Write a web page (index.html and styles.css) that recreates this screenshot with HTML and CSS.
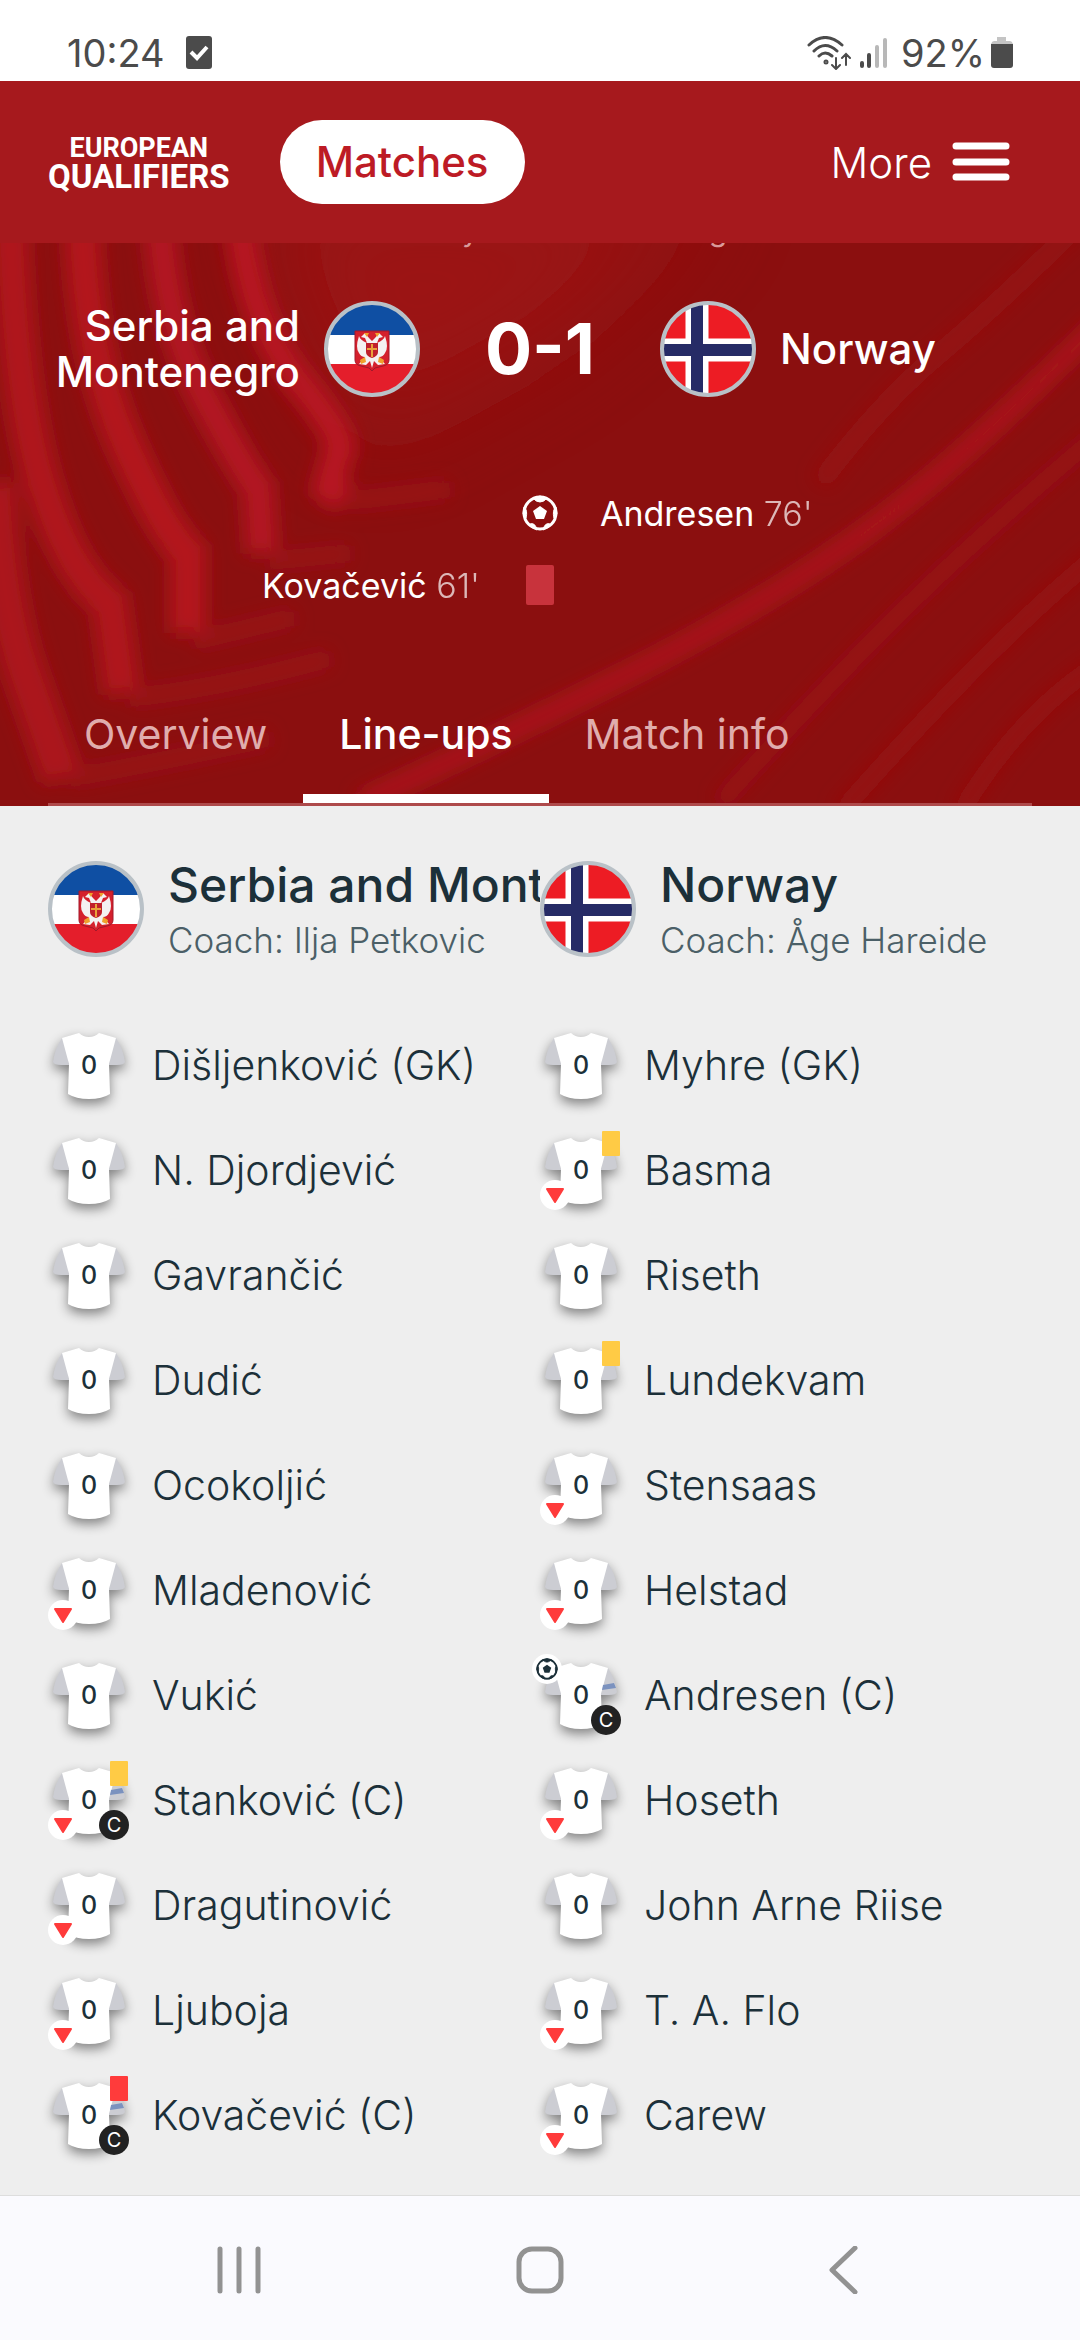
FILE: index.html
```html
<!doctype html>
<html lang="en">
  <head>
    <meta charset="UTF-8" />
    <meta name="viewport" content="width=device-width, initial-scale=1.0" />
    <title>Serbia and Montenegro 0-1 Norway | Line-ups</title>
    <link rel="stylesheet" href="styles.css">
  </head>
  <body>
    <!-- Shared icons -->
    <svg class="sprite" aria-hidden="true">
      <symbol id="flag-scg" viewBox="0 0 96 96">
        <clipPath id="disc"><circle cx="48" cy="48" r="45" /></clipPath>
        <g clip-path="url(#disc)">
          <rect width="96" height="34" fill="#0f4fa3" />
          <rect y="34" width="96" height="29" fill="#fff" />
          <rect y="63" width="96" height="33" fill="#e41e2b" />
        </g>
        <path d="M31 30h34v29q0 5-6 6l-8 2-3 3-3-3-8-2q-6-1-6-6z" fill="#d4202c" stroke="#a3182a" stroke-width="1" />
        <path d="M45 37l-4-5-4 4 4 1 2 5q-7-3-8-7-4 12 0 17 2 4 6 4l-6 7 7 1 4-4 2 7 2-7 4 4 7-1-6-7q4 0 6-4 4-5 0-17-1 4-8 7l2-5 4-1-4-4-4 5-3 3z" fill="#f4f1f1" />
        <path d="M40 32h5l-2 4zM51 32h5l-3 4zM36 59l5-3 1 5-5 2zM60 59l-5-3-1 5 5 2z" fill="#f0a02c" />
        <path d="M42 42h12v9q0 4-6 6-6-2-6-6z" fill="#c01f2b" />
        <path d="M48 43v13M43 48h10" stroke="#e9a13a" stroke-width="2" />
        <circle cx="48" cy="48" r="46" fill="none" stroke="#b9c1c7" stroke-width="4" />
      </symbol>
      <symbol id="flag-nor" viewBox="0 0 96 96">
        <g clip-path="url(#disc)">
          <rect width="96" height="96" fill="#ed1c24" />
          <path d="M37 0v96M0 49h96" stroke="#fff" stroke-width="23" />
          <path d="M37 0v96M0 49h96" stroke="#262b66" stroke-width="12" />
        </g>
        <circle cx="48" cy="48" r="46" fill="none" stroke="#b9c1c7" stroke-width="4" />
      </symbol>
      <symbol id="ball" viewBox="0 0 36 36">
        <circle cx="18" cy="18" r="16" fill="none" stroke="currentColor" stroke-width="3" />
        <path d="M18 11l7 5-3 8h-8l-3-8z" fill="currentColor" />
        <path d="M11 3q3 4 7 4t7-4l-7-2zM2 12q4 3 2 11l-3-4zM34 12q-4 3-2 11l3-4zM8 29q5-2 7 6l-6-3zM28 29q-5-2-7 6l6-3z" fill="currentColor" stroke="currentColor" stroke-width="1" />
      </symbol>
      <symbol id="jersey" viewBox="0 0 82 82">
        <path d="M14 14Q7 24 5 38q1 3 8 3h8L20 20zM68 14q7 10 9 24-1 3-8 3h-8l1-21z" fill="#cccdd3" />
        <path d="M14 14l17-5q4 4 10 4t10-4l17 5-7 26 1 30q-8 5-21 5t-21-5l1-30z" fill="#fff" />
      </symbol>
      <symbol id="jersey-captain" viewBox="0 0 82 82">
        <use href="#jersey" />
        <path d="M63 31l11-2 2 5-14 2z" fill="#7b92bf" />
      </symbol>
      <symbol id="sub-off" viewBox="0 0 30 30">
        <path d="M7 9h16l-8 13z" fill="#ff3b3b" stroke="#ff3b3b" stroke-width="2" stroke-linejoin="round" />
      </symbol>
    </svg>

    <!-- Phone status bar -->
    <div class="status-bar">
      <div class="status-group">
        <span>10:24</span>
        <svg class="task-icon" width="28" height="34" viewBox="0 0 28 34">
          <rect x="1" y="0" width="26" height="33" rx="3" fill="#4b4b4b" />
          <path d="M6 16l6 6 10-11" fill="none" stroke="#fff" stroke-width="4" />
        </svg>
      </div>
      <div class="status-group">
        <svg width="44" height="34" viewBox="0 0 44 34" fill="none" stroke="#4b4b4b" stroke-width="3" stroke-linecap="round">
          <path d="M2 9q16-15 33 0M7 15q11-11 23 0M12 20q6-6 13 0" />
          <circle cx="19" cy="26" r="1" />
          <path d="M29 22v10M25 29l4 4 4-4M39 29V19M35 22l4-4 4 4" stroke-width="2" />
        </svg>
        <svg class="signal-icon" width="28" height="34" viewBox="0 0 28 34" stroke-width="4" stroke-linecap="round">
          <path d="M3 27v3M10 19v11" stroke="#4b4b4b" />
          <path d="M18 11v19M26 4v26" stroke="#b8b8b8" />
        </svg>
        <span>92%</span>
        <svg class="battery-icon" width="22" height="32" viewBox="0 0 22 32">
          <path d="M6 0h9v4h4q2 0 3 3H0q1-3 3-3h3z" fill="#c4c4c4" />
          <path d="M0 7h22v21q0 3-3 3H3q-3 0-3-3z" fill="#4b4b4b" />
        </svg>
      </div>
    </div>

    <header class="site-header">
      <a class="logo" href="#"><span class="logo-top">EUROPEAN</span><span class="logo-bottom">QUALIFIERS</span></a>
      <a class="pill" href="#">Matches</a>
      <button class="more" type="button">
        More
        <svg width="58" height="40" viewBox="0 0 58 40" stroke="#fff" stroke-width="7" stroke-linecap="round">
          <path d="M4 4h50M4 20h50M4 35h50" />
        </svg>
      </button>
    </header>

    <!-- Match summary -->
    <section class="hero">
      <svg class="hero-art" viewBox="0 0 1080 563" preserveAspectRatio="none" aria-hidden="true">
        <defs>
          <filter id="soft" x="-20%" y="-20%" width="140%" height="140%"><feGaussianBlur stdDeviation="9" /></filter>
          <filter id="wide" x="-50%" y="-50%" width="200%" height="200%"><feGaussianBlur stdDeviation="50" /></filter>
        </defs>
        <path d="M250-60H720L560 90 360 200z" fill="#a01416" opacity="0.8" filter="url(#wide)" />
        <g fill="none" filter="url(#soft)">
          <path d="M350 258l100-12M270 318l80-8M195 398l100-24M130 455q90-10 200-40M70 535q90-16 200-40" stroke="#a8161d" stroke-width="18" opacity="0.5" />
          <path d="M240-20Q250 80 300 140T338 210L328 245 345 256" stroke="#b81723" stroke-width="30" />
          <path d="M160-20Q165 80 205 155T258 245L262 310" stroke="#b31721" stroke-width="32" />
          <path d="M82-20Q85 110 125 200T188 310L188 390" stroke="#b4171f" stroke-width="36" />
          <path d="M10-20Q15 150 42 240T110 360L122 450" stroke="#b0171e" stroke-width="36" />
          <path d="M-5 240Q0 360 25 430T62 535" stroke="#ac151c" stroke-width="40" />
          <path d="M1100 80Q950 230 850 300T620 435 360 560" stroke="#ae161d" stroke-width="18" />
          <path d="M1100-40Q1000 60 940 110T820 240" stroke="#a01418" stroke-width="20" opacity="0.5" />
          <path d="M1100 190Q970 300 890 380T720 560" stroke="#a01418" stroke-width="16" opacity="0.7" />
          <path d="M1100 310Q990 400 840 570M1100 420Q1020 470 960 570" stroke="#9b1316" stroke-width="18" opacity="0.7" />
        </g>
      </svg>
      <div class="round"><span>Saturday 12 Nov - First leg</span></div>
      <div class="scoreline">
        <div class="side side-home">
          <span>Serbia and Montenegro</span>
          <svg class="flag" role="img" aria-label="Serbia and Montenegro"><use href="#flag-scg" /></svg>
        </div>
        <strong class="score">0-1</strong>
        <div class="side">
          <svg class="flag" role="img" aria-label="Norway"><use href="#flag-nor" /></svg>
          <span>Norway</span>
        </div>
      </div>
      <div class="events">
        <div class="event">
          <span></span>
          <svg class="event-ball"><use href="#ball" /></svg>
          <span>Andresen <small>76'</small></span>
        </div>
        <div class="event">
          <span class="event-home">Kovačević <small>61'</small></span>
          <i class="event-card"></i>
          <span></span>
        </div>
      </div>
      <nav class="tabs">
        <a class="tab" href="#">Overview</a>
        <a class="tab active" href="#" aria-current="page">Line-ups</a>
        <a class="tab" href="#">Match info</a>
      </nav>
    </section>

    <!-- Line-ups -->
    <main class="lineups">
      <section class="team">
        <div class="team-header">
          <svg class="flag"><use href="#flag-scg" /></svg>
          <div>
            <h2>Serbia and Montenegro</h2>
            <p>Coach: Ilja Petkovic</p>
          </div>
        </div>
        <ul class="players">
          <li><span class="shirt"><svg><use href="#jersey" /></svg><b>0</b></span>Dišljenković (GK)</li>
          <li><span class="shirt"><svg><use href="#jersey" /></svg><b>0</b></span>N. Djordjević</li>
          <li><span class="shirt"><svg><use href="#jersey" /></svg><b>0</b></span>Gavrančić</li>
          <li><span class="shirt"><svg><use href="#jersey" /></svg><b>0</b></span>Dudić</li>
          <li><span class="shirt"><svg><use href="#jersey" /></svg><b>0</b></span>Ocokoljić</li>
          <li><span class="shirt"><svg><use href="#jersey" /></svg><b>0</b><svg class="badge off"><use href="#sub-off" /></svg></span>Mladenović</li>
          <li><span class="shirt"><svg><use href="#jersey" /></svg><b>0</b></span>Vukić</li>
          <li><span class="shirt"><svg><use href="#jersey-captain" /></svg><b>0</b><i class="card yellow"></i><svg class="badge off"><use href="#sub-off" /></svg><i class="badge captain">C</i></span>Stanković (C)</li>
          <li><span class="shirt"><svg><use href="#jersey" /></svg><b>0</b><svg class="badge off"><use href="#sub-off" /></svg></span>Dragutinović</li>
          <li><span class="shirt"><svg><use href="#jersey" /></svg><b>0</b><svg class="badge off"><use href="#sub-off" /></svg></span>Ljuboja</li>
          <li><span class="shirt"><svg><use href="#jersey-captain" /></svg><b>0</b><i class="card red"></i><i class="badge captain">C</i></span>Kovačević (C)</li>
        </ul>
      </section>
      <section class="team">
        <div class="team-header">
          <svg class="flag"><use href="#flag-nor" /></svg>
          <div>
            <h2>Norway</h2>
            <p>Coach: Åge Hareide</p>
          </div>
        </div>
        <ul class="players">
          <li><span class="shirt"><svg><use href="#jersey" /></svg><b>0</b></span>Myhre (GK)</li>
          <li><span class="shirt"><svg><use href="#jersey" /></svg><b>0</b><i class="card yellow"></i><svg class="badge off"><use href="#sub-off" /></svg></span>Basma</li>
          <li><span class="shirt"><svg><use href="#jersey" /></svg><b>0</b></span>Riseth</li>
          <li><span class="shirt"><svg><use href="#jersey" /></svg><b>0</b><i class="card yellow"></i></span>Lundekvam</li>
          <li><span class="shirt"><svg><use href="#jersey" /></svg><b>0</b><svg class="badge off"><use href="#sub-off" /></svg></span>Stensaas</li>
          <li><span class="shirt"><svg><use href="#jersey" /></svg><b>0</b><svg class="badge off"><use href="#sub-off" /></svg></span>Helstad</li>
          <li><span class="shirt"><svg><use href="#jersey-captain" /></svg><b>0</b><svg class="badge goal"><use href="#ball" /></svg><i class="badge captain">C</i></span>Andresen (C)</li>
          <li><span class="shirt"><svg><use href="#jersey" /></svg><b>0</b><svg class="badge off"><use href="#sub-off" /></svg></span>Hoseth</li>
          <li><span class="shirt"><svg><use href="#jersey" /></svg><b>0</b></span>John Arne Riise</li>
          <li><span class="shirt"><svg><use href="#jersey" /></svg><b>0</b><svg class="badge off"><use href="#sub-off" /></svg></span>T. A. Flo</li>
          <li><span class="shirt"><svg><use href="#jersey" /></svg><b>0</b><svg class="badge off"><use href="#sub-off" /></svg></span>Carew</li>
        </ul>
      </section>
    </main>

    <!-- Phone navigation bar -->
    <nav class="phone-nav">
      <button type="button" aria-label="Recent apps">
        <svg width="48" height="48" viewBox="0 0 48 48"><path d="M5 3v42M24 3v42M43 3v42" /></svg>
      </button>
      <button type="button" aria-label="Home">
        <svg width="48" height="48" viewBox="0 0 48 48"><rect x="3" y="3" width="42" height="42" rx="13" /></svg>
      </button>
      <button type="button" aria-label="Back">
        <svg width="48" height="48" viewBox="0 0 48 48"><path d="M38 2L15 24l23 22" /></svg>
      </button>
    </nav>
  </body>
</html>
```

FILE: styles.css
```css
* {
  box-sizing: border-box;
}
body {
  margin: 0;
  min-height: 100vh;
  display: flex;
  flex-direction: column;
  background: #eee;
  color: #1c3039;
  font-family: Inter, "Open Sans", sans-serif;
  font-size: 42px;
}
a {
  color: inherit;
  text-decoration: none;
}
button {
  border: 0;
  background: none;
  color: inherit;
  font: inherit;
  cursor: pointer;
}
svg {
  display: block;
  flex: none;
}
.sprite {
  position: absolute;
  width: 0;
  height: 0;
}

/* Status bar */
.status-bar {
  display: flex;
  justify-content: space-between;
  padding: 29px 67px 4px;
  background: #fff;
  color: #4b4b4b;
  font-size: 38px;
  line-height: 48px;
}
.status-group {
  display: flex;
  align-items: center;
}
.task-icon {
  margin-left: 20px;
}
.signal-icon {
  margin: 0 14px 0 8px;
}
.battery-icon {
  margin-left: 6px;
}

/* Header */
.site-header {
  display: flex;
  align-items: center;
  padding: 39px 64px 39px 48px;
  background: #a6191d;
  color: #fff;
}
.logo {
  display: flex;
  flex-direction: column;
  align-items: center;
  padding-top: 4px;
  font-family: Roboto, sans-serif;
  font-weight: 700;
}
.logo-top {
  font-size: 27px;
  line-height: 26px;
}
.logo-bottom {
  font-size: 33px;
  line-height: 32px;
}
.pill {
  margin-left: 50px;
  padding: 0 36px;
  border-radius: 42px;
  background: #fff;
  color: #bd1b25;
  font-weight: 500;
  line-height: 84px;
}
.more {
  display: flex;
  align-items: center;
  gap: 20px;
  margin-left: auto;
  padding: 0 6px;
  font-weight: 300;
}

/* Hero */
.hero {
  position: relative;
  overflow: hidden;
  background: #8b0f0f;
  color: #fff;
}
.hero-art {
  position: absolute;
  inset: 0;
  width: 100%;
  height: 100%;
}
.round,
.scoreline,
.events,
.tabs {
  position: relative;
}
.round {
  display: flex;
  align-items: flex-end;
  justify-content: center;
  height: 6px;
  overflow: hidden;
  color: #d99a9a;
  font-size: 30px;
  line-height: 38px;
}
.flag {
  width: 96px;
  height: 96px;
}
.scoreline {
  display: flex;
  align-items: center;
  padding: 52px 36px 0;
}
.side {
  flex: 1 1 0;
  display: flex;
  align-items: center;
  gap: 24px;
  font-weight: 500;
  line-height: 46px;
}
.side-home {
  justify-content: flex-end;
  text-align: right;
}
.score {
  min-width: 240px;
  font-size: 70px;
  font-weight: 700;
  line-height: 96px;
  text-align: center;
}
.events {
  padding: 80px 48px 0;
}
.event {
  display: grid;
  grid-template-columns: 1fr 120px 1fr;
  align-items: center;
  justify-items: center;
  height: 72px;
  font-size: 34px;
}
.event span {
  width: 100%;
}
.event small {
  font-size: 34px;
  font-weight: 300;
  opacity: 0.7;
}
.event-home {
  text-align: right;
}
.event-ball {
  width: 36px;
  height: 36px;
}
.event-card {
  width: 28px;
  height: 40px;
  border-radius: 2px;
  background: #c8333c;
}
.tabs {
  display: flex;
  margin: 54px 48px 0;
  border-bottom: 3px solid #ae4a4b;
}
.tab {
  padding: 0 36px;
  border-bottom: 9px solid transparent;
  color: #e0adad;
  font-size: 41px;
  font-weight: 400;
  line-height: 119px;
}
.tab.active {
  border-color: #fff;
  color: #fff;
  font-weight: 500;
}

/* Line-ups */
.lineups {
  flex: 1;
  display: grid;
  grid-template-columns: 1fr 1fr;
  padding: 0 48px 28px;
}
.team {
  min-width: 0;
}
.team-header {
  display: flex;
  gap: 24px;
  padding: 55px 0;
  overflow: hidden;
  white-space: nowrap;
}
.team-header h2 {
  margin: 0;
  font-size: 48px;
  font-weight: 500;
  line-height: 48px;
}
.team-header p {
  margin: 0;
  color: #4b5f67;
  font-size: 35px;
  font-weight: 300;
  line-height: 62px;
}
.team-header div {
  height: 96px;
}
.players {
  margin: 0;
  padding: 0;
  list-style: none;
}
.players li {
  display: flex;
  align-items: center;
  gap: 22px;
  height: 105px;
  font-size: 41px;
  font-weight: 300;
  white-space: nowrap;
}
.shirt {
  position: relative;
  display: grid;
  width: 82px;
  height: 82px;
}
.shirt > * {
  grid-area: 1 / 1;
}
.shirt > svg:first-child {
  width: 82px;
  height: 82px;
  filter: drop-shadow(0 5px 6px rgba(0, 0, 0, 0.45));
}
.shirt b {
  place-self: center;
  z-index: 1;
  font-size: 25px;
  font-weight: 500;
}
.badge {
  position: absolute;
  bottom: 1px;
  width: 30px;
  height: 30px;
  border-radius: 50%;
  background: #fff;
}
.off {
  left: 0;
}
.goal {
  top: 0;
  left: -8px;
  padding: 4px;
}
.captain {
  right: 1px;
  background: #222;
  color: #fff;
  font-size: 20px;
  font-style: normal;
  font-weight: 400;
  line-height: 30px;
  text-align: center;
}
.card {
  position: absolute;
  top: 2px;
  right: 2px;
  width: 18px;
  height: 25px;
  border-radius: 1px;
}
.yellow {
  background: #ffcb45;
}
.red {
  background: #ff3b3b;
}

/* Navigation bar */
.phone-nav {
  display: grid;
  grid-template-columns: repeat(3, 1fr);
  padding: 50px 88px 46px;
  border-top: 1px solid #ddd;
  background: #fafafe;
}
.phone-nav button {
  display: flex;
  justify-content: center;
  padding: 0;
}
.phone-nav svg {
  fill: none;
  stroke: #929292;
  stroke-width: 5;
  stroke-linecap: round;
  stroke-linejoin: round;
}
```
